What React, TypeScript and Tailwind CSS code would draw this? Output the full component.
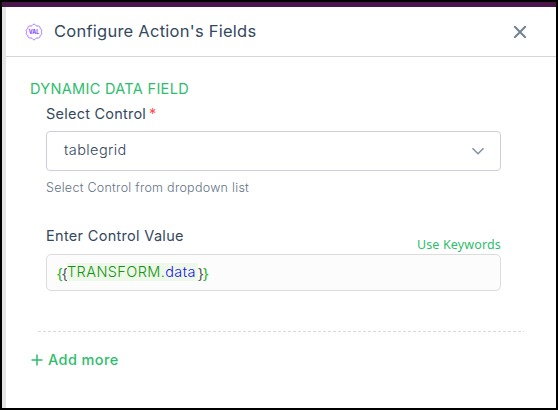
import React from "react";

const FONT = "font-['Inter','Noto_Sans',sans-serif]";

function BadgeIcon() {
  return (
    <svg width="18" height="18" viewBox="0 0 18 18" fill="none" className="shrink-0">
      <path
        d="M6.300 3C7.400 3 7.700 1.100 9 1.100S10.600 3 11.700 3h1.800c1.300 0 1.600 1.300 1.600 2.300 0 .8 1.700.9 1.700 2.100 0 .7-.6 1-.6 1.600s.6.9.6 1.600c0 1.200-1.700 1.300-1.700 2.100 0 1-.3 2.300-1.600 2.300h-1.800c-1.100 0-1.400 1.900-2.700 1.900S7.400 15 6.300 15H4.500c-1.300 0-1.600-1.300-1.600-2.300 0-.8-1.700-.9-1.700-2.100 0-.7.6-1 .6-1.600s-.6-.9-.6-1.600c0-1.200 1.700-1.300 1.700-2.100 0-1 .3-2.300 1.600-2.300z"
        stroke="#a274ff"
        strokeWidth="1"
      />
      <text x="9" y="10.900" textAnchor="middle" textLength="10.500" lengthAdjust="spacingAndGlyphs" fontSize="5.500" fontWeight="800" fill="#8d4cff" fontFamily="Inter, sans-serif">
        VAL
      </text>
    </svg>
  );
}

function Header() {
  return (
    <header className="flex h-[50px] shrink-0 items-center border-b border-[#d3d7d9] pl-[19px] pr-[29px]">
      <BadgeIcon />
      <h1 className="mb-px ml-[11px] text-[16.500px] leading-6 tracking-[0.250px] text-[#34495e]">Configure Action's Fields</h1>
      <button aria-label="Close" className="ml-auto">
        <svg width="14" height="14" viewBox="0 0 14 14" stroke="#73828e" strokeWidth="2" fill="none">
          <path d="M1.300 1.300l11.400 11.400M12.700 1.300L1.300 12.700" />
        </svg>
      </button>
    </header>
  );
}

function Fields() {
  return (
    <main className="flex flex-col pl-6 pr-8 pt-[23px]">
      <h2 className="h-[18px] text-[14.500px] leading-[18px] tracking-[0.320px] text-[#2dbe6c]">DYNAMIC DATA FIELD</h2>
      <section className="flex flex-col pl-4 pr-[23px]">
        <label className="mt-[6px] flex h-5 gap-[3px] text-[14.500px] leading-5 tracking-[0.230px] text-[#34495e]">
          Select Control <span className="text-[#ff4d4f]">*</span>
        </label>
        <div className="mt-[7px] flex h-10 items-center justify-between rounded border border-[#cfcddd] pl-[17px] pr-[15px]">
          <span className="mb-[3px] text-[14.500px] leading-5 tracking-[0.400px] font-light text-[#34495e]">tablegrid</span>
          <svg width="14" height="8" viewBox="0 0 14 8" fill="none" stroke="#8592a0" strokeWidth="1.600">
            <path d="M1.500 1.200L7 6.700l5.500-5.500" />
          </svg>
        </div>
        <p className="mt-[7px] h-5 text-[12.500px] leading-5 tracking-[0.270px] font-light text-[#5f7387]">Select Control from dropdown list</p>
        <div className="mt-7 flex h-[28px] justify-between">
          <label className="text-[14.500px] leading-5 tracking-[0.310px] text-[#34495e]">Enter Control Value</label>
          <a className="pt-[9px] font-['Noto_Sans',sans-serif] text-[12.500px] leading-5 tracking-[0.15px] text-[#2dbe6c]">Use Keywords</a>
        </div>
        <div className="flex h-[37px] items-center rounded-[5px] border border-[#dcdcdc] bg-[#fcfcfc] pb-[2px] pl-[10px] text-[14.500px] leading-[18px]">
          <span className="w-[5px] font-['Noto_Sans'] text-[#16b51c]">{"{"}</span>
          <span className="w-[5px] font-['Noto_Sans'] text-[#555]">{"{"}</span>
          <span className="w-[131px] bg-[#eef8e8] font-light tracking-[0.400px] text-[#149414]">TRANSFORM.<span className="text-[#1818e8]">data</span></span>
          <span className="w-[5px] font-['Noto_Sans'] text-[#555]">{"}"}</span>
          <span className="w-[5px] font-['Noto_Sans'] text-[#16b51c]">{"}"}</span>
        </div>
      </section>
      <div className="ml-2 mt-[40px] h-px bg-[repeating-linear-gradient(to_right,#d9d9d9_0_3px,transparent_3px_5px)]" />
      <button className="mt-[18px] flex h-5 items-center text-left text-[14.500px] leading-5 tracking-[0.400px] font-medium text-[#2dbe6c]">
        <svg width="12" height="12" viewBox="0 0 12 12" className="ml-px mr-[5px]" stroke="currentColor" strokeWidth="1.500">
          <path d="M6 .5v11M.5 6h11" />
        </svg>
        Add more
      </button>
    </main>
  );
}

export default function App() {
  return (
    <div className={`flex h-[410px] w-[558px] flex-col overflow-hidden border-2 border-black bg-white ${FONT}`}>
      <div className="h-[5px] shrink-0 bg-[#4b154b]" />
      <div className="flex min-h-0 flex-1 flex-col border-l-4 border-[#e4e4e4]">
        <Header />
        <Fields />
      </div>
    </div>
  );
}
